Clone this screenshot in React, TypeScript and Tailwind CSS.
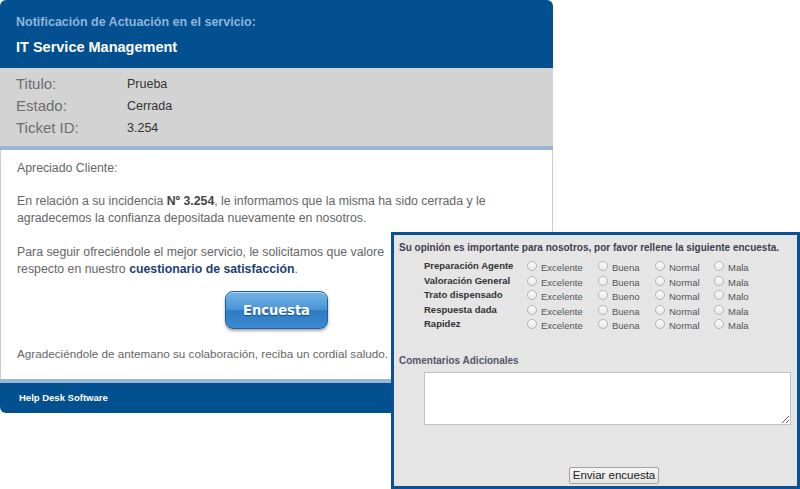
const INFO_ROWS = [
  { label: "Titulo:", value: "Prueba" },
  { label: "Estado:", value: "Cerrada" },
  { label: "Ticket ID:", value: "3.254" },
];

const QUESTIONS = [
  { label: "Preparación Agente", options: ["Excelente", "Buena", "Normal", "Mala"] },
  { label: "Valoración General", options: ["Excelente", "Buena", "Normal", "Mala"] },
  { label: "Trato dispensado", options: ["Excelente", "Bueno", "Normal", "Malo"] },
  { label: "Respuesta dada", options: ["Excelente", "Buena", "Normal", "Mala"] },
  { label: "Rapidez", options: ["Excelente", "Buena", "Normal", "Mala"] },
];

export default function App() {
  return (
    <div className="relative h-[489px] w-[800px] overflow-hidden bg-white font-['Liberation_Sans',Arial,sans-serif]">
      <NotificationCard />
      <SurveyPanel />
    </div>
  );
}

function NotificationCard() {
  return (
    <div className="w-[553px]">
      <div className="h-[68px] rounded-t-[6px] bg-[#02508f] px-4 pt-[13px]">
        <p className="text-[12.5px] leading-[18px] font-bold text-[#8fb5dc]">
          Notificación de Actuación en el servicio:
        </p>
        <p className="mt-[7px] text-[14.5px] leading-[18px] font-bold text-white">
          IT Service Management
        </p>
      </div>

      <div className="h-[78px] bg-[#d3d3d3] px-4 pt-[5px]">
        {INFO_ROWS.map((row) => (
          <div key={row.label} className="flex h-[22px] items-center">
            <span className="w-[111px] text-[15px] text-[#6f6f6f]">{row.label}</span>
            <span className="text-[12.5px] text-[#333]">{row.value}</span>
          </div>
        ))}
      </div>

      <div className="h-[4px] bg-[#98b6d6]" />

      <div className="h-[229px] border-x border-[#cccccc] bg-white px-4 pt-[10px] text-[12.3px] leading-[17px] text-[#666]">
        <p>Apreciado Cliente:</p>

        <p className="mt-[16px]">
          En relación a su incidencia <b className="text-[#444]">Nº 3.254</b>, le
          informamos que la misma ha sido cerrada y le
          <br />
          agradecemos la confianza depositada nuevamente en nosotros.
        </p>

        <p className="mt-[17px]">
          Para seguir ofreciéndole el mejor servicio, le solicitamos que valore
          <br />
          respecto en nuestro{" "}
          <b className="text-[#1b3f72]">cuestionario de satisfacción</b>.
        </p>

        <button
          type="button"
          className="mx-auto mt-[13px] block h-[38px] w-[103px] rounded-[8px] border border-[#1f5f9c] bg-[linear-gradient(#74b4e7,#4b95d6_48%,#2e7cc4_52%,#3b8ad0)] font-['DejaVu_Sans_Condensed','DejaVu_Sans',sans-serif] text-[14.5px] font-bold text-white shadow-[0_2px_3px_rgba(0,0,0,0.35),inset_0_1px_0_rgba(255,255,255,0.5)] [font-stretch:condensed] [text-shadow:0_1px_1px_rgba(0,40,90,0.6)]"
        >
          Encuesta
        </button>

        <p className="mt-[16px] text-[11.7px]">
          Agradeciéndole de antemano su colaboración, reciba un cordial saludo.
        </p>
      </div>

      <div className="h-[4px] bg-[#98b6d6]" />

      <div className="flex h-[30px] items-center rounded-bl-[6px] bg-[#02508f] px-[19px] text-[9.5px] font-bold text-white">
        Help Desk Software
      </div>
    </div>
  );
}

function SurveyPanel() {
  return (
    <div className="absolute top-[232px] left-[391px] h-[257px] w-[409px] border-[3px] border-[#0b5194] bg-[#e5e5e5]">
      <p className="pt-[6px] pl-[5px] text-[10px] leading-[13px] font-bold text-[#3f3f4f]">
        Su opinión es importante para nosotros, por favor rellene la siguiente encuesta.
      </p>

      <div className="mt-[5px] pl-[30px]">
        {QUESTIONS.map((q) => (
          <div
            key={q.label}
            className="grid h-[14.5px] grid-cols-[103px_71px_57px_59px_auto] items-center"
          >
            <span className="text-[9.5px] leading-[12px] font-bold text-[#333]">{q.label}</span>
            {q.options.map((opt) => (
              <span key={opt} className="flex items-center gap-[4px]">
                <span className="h-[10px] w-[10px] rounded-full border border-[#b5b5b5] bg-[linear-gradient(#fdfdfd,#e8e8e8)]" />
                <span className="mt-[4px] text-[9.5px] leading-[10px] text-[#555]">{opt}</span>
              </span>
            ))}
          </div>
        ))}
      </div>

      <p className="mt-[21px] pl-[5px] text-[10px] font-bold text-[#55556a]">
        Comentarios Adicionales
      </p>

      <div className="mt-[4px] pl-[30px]">
        <textarea className="block h-[53px] w-[367px] border border-[#c2c2c2] bg-white" />
      </div>

      <div className="mt-[37px] pl-[175px]">
        <button
          type="button"
          className="h-[17px] w-[90px] rounded-[2px] border border-[#a3a3a3] bg-[linear-gradient(#f6f6f6,#e3e3e3)] text-[11.5px] leading-[15px] text-[#222]"
        >
          Enviar encuesta
        </button>
      </div>
    </div>
  );
}
